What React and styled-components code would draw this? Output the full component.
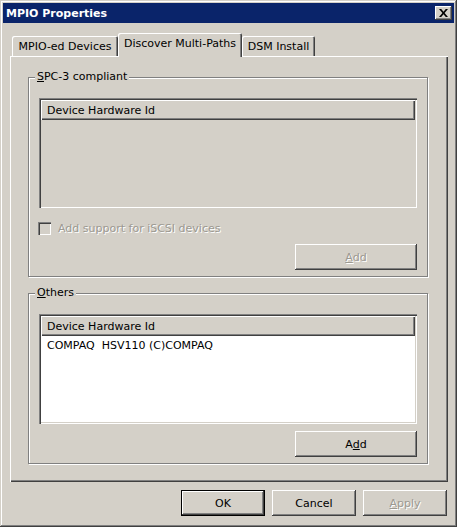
import React from "react";
import styled, { createGlobalStyle } from "styled-components";

const face = "#d4d0c8";
const shadow = "#808080";
const dark = "#404040";

const Global = createGlobalStyle`
  html, body { margin: 0; padding: 0; background: ${face}; }
  body { font-family: "DejaVu Sans", Tahoma, sans-serif; font-size: 11px; color: #000; }
`;

const Window = styled.div`
  width: 457px;
  height: 527px;
  box-sizing: border-box;
  padding: 3px;
  background: ${face};
  box-shadow: inset -1px -1px 0 ${dark}, inset 1px 1px 0 ${face},
    inset -2px -2px 0 ${shadow}, inset 2px 2px 0 #fff;
  display: flex;
  flex-direction: column;
`;

const TitleBar = styled.div`
  height: 20px;
  background: #0a246a;
  display: flex;
  align-items: center;
  justify-content: space-between;
  padding: 0 2px 0 3px;
`;

const Title = styled.span`
  color: #fff;
  font-weight: bold;
  font-size: 11px;
`;

const CloseButton = styled.div`
  width: 17px;
  height: 14px;
  background: ${face};
  box-shadow: inset -1px -1px 0 ${dark}, inset 1px 1px 0 #fff,
    inset -2px -2px 0 ${shadow};
  display: flex;
  align-items: center;
  justify-content: center;
`;

const Content = styled.div`
  display: flex;
  flex-direction: column;
  padding: 10px 6px 0 7px;
`;

const TabStrip = styled.div`
  display: flex;
  align-items: flex-end;
  height: 23px;
  padding-left: 2px;
  position: relative;
  z-index: 1;
`;

const Tab = styled.div`
  box-sizing: border-box;
  width: ${p => p.$w}px;
  height: ${p => (p.$active ? 24 : 20)}px;
  margin-bottom: ${p => (p.$active ? -1 : 0)}px;
  background: ${face};
  border-radius: 2px 2px 0 0;
  box-shadow: inset 1px 1px 0 #fff, inset -1px 0 0 ${dark},
    inset -2px 0 0 ${shadow};
  display: flex;
  align-items: ${p => (p.$active ? "flex-start" : "center")};
  padding-top: ${p => (p.$active ? 4 : 0)}px;
  justify-content: center;
  white-space: nowrap;
`;

const Panel = styled.div`
  height: 426px;
  box-sizing: border-box;
  padding: 14px 20px 0 18px;
  background: ${face};
  box-shadow: inset 1px 1px 0 #fff, inset -1px -1px 0 ${dark},
    inset -2px -2px 0 ${shadow};
  display: flex;
  flex-direction: column;
`;

const Group = styled.fieldset`
  margin: ${p => p.$top || 0}px 0 0 0;
  padding: 14px 10px 6px 10px;
  min-width: 0;
  border: 1px solid ${shadow};
  box-shadow: 1px 1px 0 #fff, inset 1px 1px 0 #fff;
  display: flex;
  flex-direction: column;
`;

const Legend = styled.legend`
  margin-left: -4px;
  padding: 0 2px;
  line-height: 14px;
  background: ${face};
`;

const ListBox = styled.div`
  height: 110px;
  box-sizing: border-box;
  padding: 2px;
  background: ${p => (p.$disabled ? face : "#fff")};
  box-shadow: inset 1px 1px 0 ${shadow}, inset 2px 2px 0 ${dark},
    inset -1px -1px 0 #fff, inset -2px -2px 0 ${face};
`;

const ListHeader = styled.div`
  height: 20px;
  box-sizing: border-box;
  padding-left: 6px;
  display: flex;
  align-items: center;
  background: ${face};
  box-shadow: inset 1px 1px 0 #fff, inset -1px -1px 0 ${dark},
    inset -2px -2px 0 ${shadow};
`;

const ListRow = styled.div`
  height: 18px;
  padding-left: 6px;
  display: flex;
  align-items: center;
  white-space: pre;
`;

const CheckRow = styled.label`
  margin-top: 14px;
  margin-left: -1px;
  display: flex;
  align-items: center;
  gap: 7px;
  height: 13px;
`;

const CheckBox = styled.span`
  width: 13px;
  height: 13px;
  box-sizing: border-box;
  background: ${face};
  box-shadow: inset 1px 1px 0 ${shadow}, inset 2px 2px 0 ${dark},
    inset -1px -1px 0 #fff, inset -2px -2px 0 ${face};
`;

const Muted = styled.span`
  color: #9c9991;
  text-shadow: 1px 1px 0 #fff;
`;

const ButtonRight = styled.div`
  display: flex;
  justify-content: flex-end;
  margin-top: ${p => p.$top}px;
`;

const Button = styled.div`
  width: ${p => p.$w || 84}px;
  height: 26px;
  box-sizing: border-box;
  display: flex;
  align-items: center;
  justify-content: center;
  background: ${face};
  color: ${p => (p.$disabled ? "#9c9991" : "#000")};
  text-shadow: ${p => (p.$disabled ? "1px 1px 0 #fff" : "none")};
  border: ${p => (p.$default ? "1px solid #000" : "none")};
  box-shadow: inset -1px -1px 0 ${dark}, inset 1px 1px 0 #fff,
    inset -2px -2px 0 ${shadow};
`;

const Footer = styled.div`
  display: flex;
  justify-content: flex-end;
  gap: 7px;
  margin-top: 8px;
  padding-right: 1px;
`;

export default function App() {
  return (
    <>
      <Global />
      <Window>
        <TitleBar>
          <Title>MPIO Properties</Title>
          <CloseButton>
            <svg width="9" height="8" viewBox="0 0 9 8">
              <path d="M0 0h2.2l2.3 2.7L6.8 0H9L5.6 4 9 8H6.8L4.5 5.3 2.2 8H0l3.4-4z" fill="#000" />
            </svg>
          </CloseButton>
        </TitleBar>
        <Content>
          <TabStrip>
            <Tab $w={106}>MPIO-ed Devices</Tab>
            <Tab $w={124} $active>Discover Multi-Paths</Tab>
            <Tab $w={73}>DSM Install</Tab>
          </TabStrip>
          <Panel>
            <Group>
              <Legend><u>S</u>PC-3 compliant</Legend>
              <ListBox $disabled>
                <ListHeader>Device Hardware Id</ListHeader>
              </ListBox>
              <CheckRow>
                <CheckBox />
                <Muted>Add support for iSCSI devices</Muted>
              </CheckRow>
              <ButtonRight $top={9}>
                <Button $w={122} $disabled><u>A</u>dd</Button>
              </ButtonRight>
            </Group>
            <Group $top={9}>
              <Legend><u>O</u>thers</Legend>
              <ListBox>
                <ListHeader>Device Hardware Id</ListHeader>
                <ListRow>COMPAQ  HSV110 (C)COMPAQ</ListRow>
              </ListBox>
              <ButtonRight $top={7}>
                <Button $w={122}>A<u>d</u>d</Button>
              </ButtonRight>
            </Group>
          </Panel>
          <Footer>
            <Button $default>OK</Button>
            <Button>Cancel</Button>
            <Button $disabled><u>A</u>pply</Button>
          </Footer>
        </Content>
      </Window>
    </>
  );
}
